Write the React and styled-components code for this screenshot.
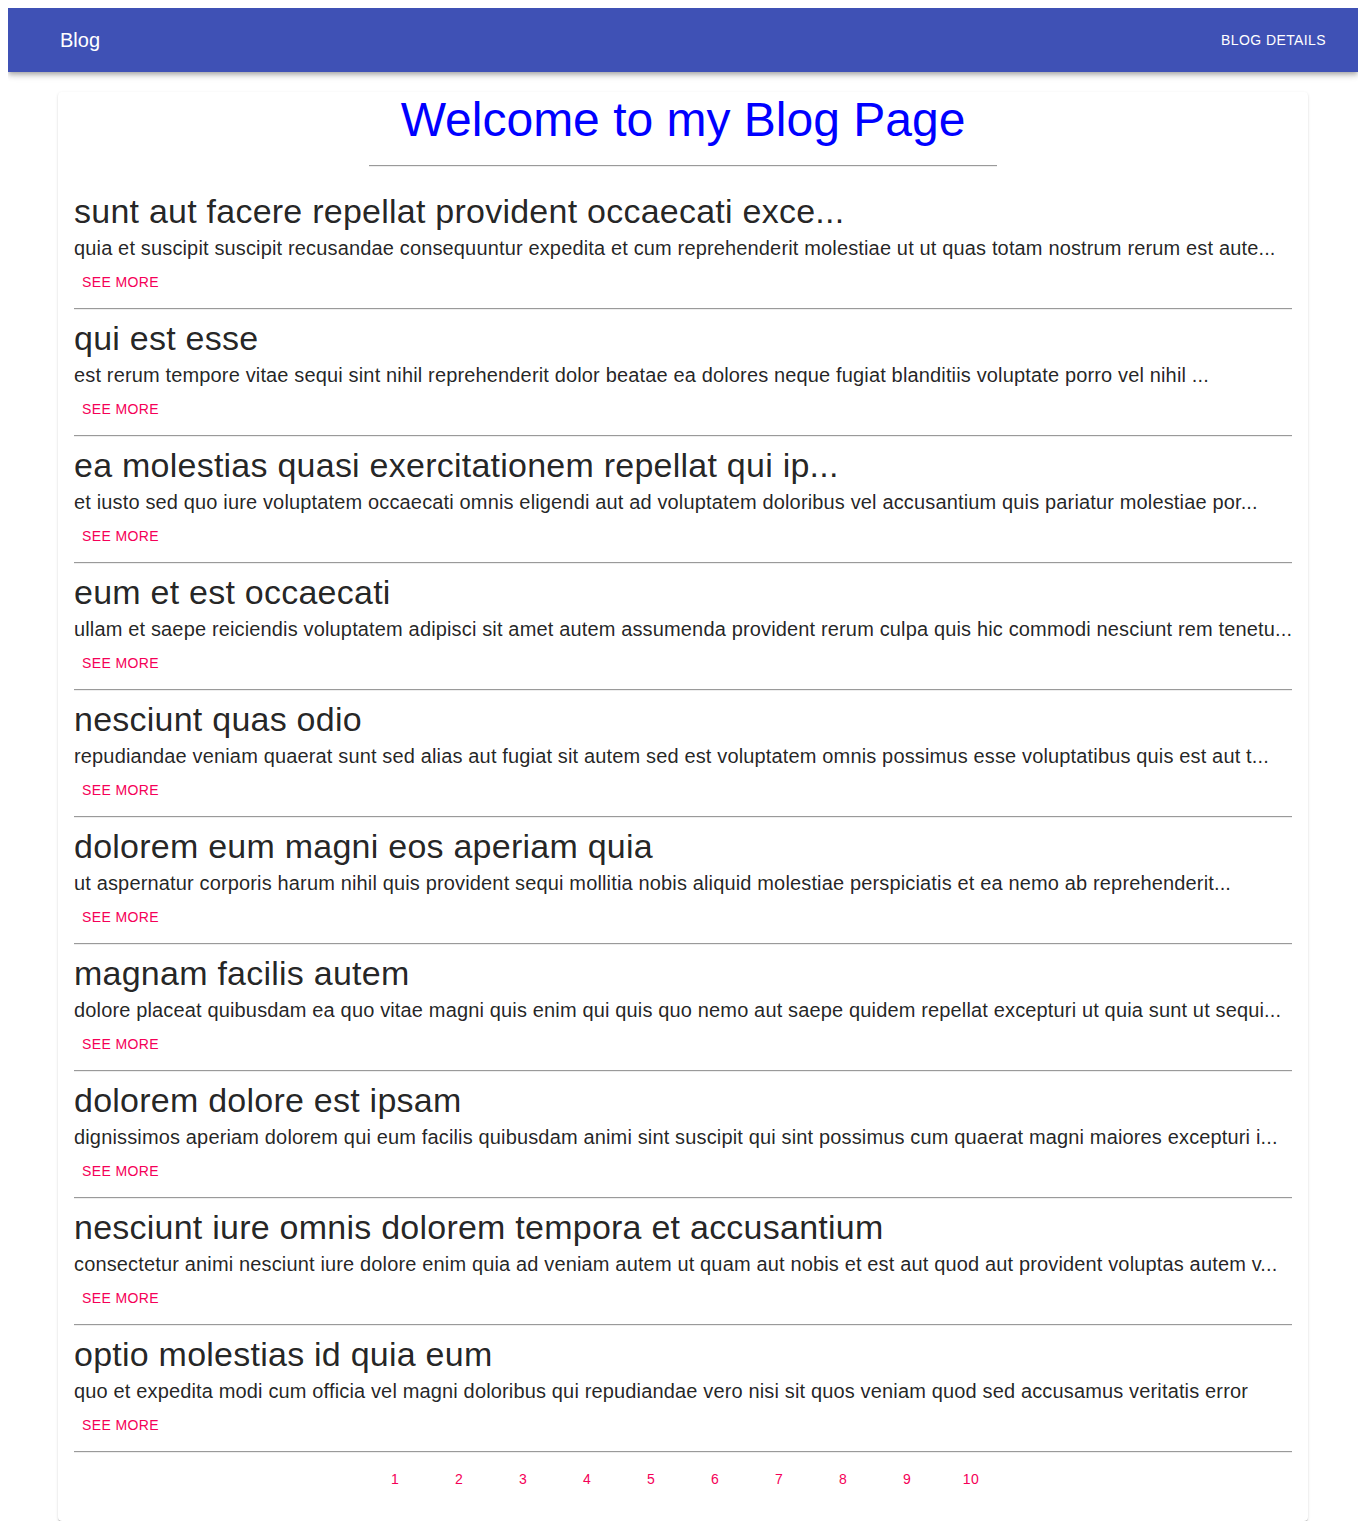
import React from "react";
import styled, { createGlobalStyle } from "styled-components";

const GlobalStyle = createGlobalStyle`
  body {
    margin: 8px;
    background: #ffffff;
    font-family: "Liberation Sans", Arial, sans-serif;
    color: rgba(0, 0, 0, 0.87);
  }
  * { box-sizing: border-box; }
`;

const AppBar = styled.header`
  height: 64px;
  background: #3f51b5;
  color: #fff;
  display: flex;
  align-items: center;
  justify-content: space-between;
  padding: 0 24px;
  box-shadow: 0px 2px 4px -1px rgba(0,0,0,0.2), 0px 4px 5px 0px rgba(0,0,0,0.14), 0px 1px 10px 0px rgba(0,0,0,0.12);
`;

const Brand = styled.div`
  margin-left: 28px;
  font-size: 20px;
  line-height: 1.6;
  font-weight: 500;
`;

const NavButton = styled.button`
  background: none;
  border: 0;
  color: #fff;
  font-family: inherit;
  font-size: 14px;
  line-height: 24px;
  letter-spacing: 0.02857em;
  text-transform: uppercase;
  padding: 6px 8px;
  cursor: pointer;
`;

const Paper = styled.main`
  margin: 20px 50px 0;
  background: #fff;
  border-radius: 4px;
  padding: 0 16px 24px;
  box-shadow: 0px 2px 1px -1px rgba(0,0,0,0.2), 0px 1px 1px 0px rgba(0,0,0,0.14), 0px 1px 3px 0px rgba(0,0,0,0.12);
`;

const Heading = styled.h1`
  margin: 0;
  font-size: 48px;
  line-height: 56px;
  font-weight: 400;
  color: #0000ff;
  text-align: center;
`;

const Rule = styled.hr`
  border: 0;
  border-top: 1px solid #9a9a9a;
  border-bottom: 1px solid #eeeeee;
  height: 0;
  width: ${(p) => p.$width || "100%"};
  margin: ${(p) => p.$margin || "8px 0 7px"};
`;

const Item = styled.article`
  display: flex;
  flex-direction: column;
  align-items: flex-start;
`;

const PostTitle = styled.h2`
  margin: 0;
  font-size: 34px;
  line-height: 42px;
  font-weight: 400;
  letter-spacing: 0.24px;
  color: rgba(0, 0, 0, 0.87);
  white-space: nowrap;
`;

const PostBody = styled.p`
  margin: 4px 0 0;
  font-size: 20px;
  line-height: 24px;
  letter-spacing: 0.15px;
  color: rgba(0, 0, 0, 0.87);
  white-space: nowrap;
`;

const TextButton = styled.button`
  background: none;
  border: 0;
  border-radius: 4px;
  color: #f50057;
  font-family: inherit;
  font-size: 14px;
  line-height: 24px;
  letter-spacing: 0.02857em;
  text-transform: uppercase;
  padding: 6px 8px;
  min-width: 64px;
  margin-top: ${(p) => p.$mt || "0"};
  cursor: pointer;
`;

const Pagination = styled.nav`
  display: flex;
  justify-content: center;
`;

const posts = [
  ["sunt aut facere repellat provident occaecati exce...", "quia et suscipit suscipit recusandae consequuntur expedita et cum reprehenderit molestiae ut ut quas totam nostrum rerum est aute..."],
  ["qui est esse", "est rerum tempore vitae sequi sint nihil reprehenderit dolor beatae ea dolores neque fugiat blanditiis voluptate porro vel nihil ..."],
  ["ea molestias quasi exercitationem repellat qui ip...", "et iusto sed quo iure voluptatem occaecati omnis eligendi aut ad voluptatem doloribus vel accusantium quis pariatur molestiae por..."],
  ["eum et est occaecati", "ullam et saepe reiciendis voluptatem adipisci sit amet autem assumenda provident rerum culpa quis hic commodi nesciunt rem tenetu..."],
  ["nesciunt quas odio", "repudiandae veniam quaerat sunt sed alias aut fugiat sit autem sed est voluptatem omnis possimus esse voluptatibus quis est aut t..."],
  ["dolorem eum magni eos aperiam quia", "ut aspernatur corporis harum nihil quis provident sequi mollitia nobis aliquid molestiae perspiciatis et ea nemo ab reprehenderit..."],
  ["magnam facilis autem", "dolore placeat quibusdam ea quo vitae magni quis enim qui quis quo nemo aut saepe quidem repellat excepturi ut quia sunt ut sequi..."],
  ["dolorem dolore est ipsam", "dignissimos aperiam dolorem qui eum facilis quibusdam animi sint suscipit qui sint possimus cum quaerat magni maiores excepturi i..."],
  ["nesciunt iure omnis dolorem tempora et accusantium", "consectetur animi nesciunt iure dolore enim quia ad veniam autem ut quam aut nobis et est aut quod aut provident voluptas autem v..."],
  ["optio molestias id quia eum", "quo et expedita modi cum officia vel magni doloribus qui repudiandae vero nisi sit quos veniam quod sed accusamus veritatis error"],
];

export default function App() {
  return (
    <>
      <GlobalStyle />
      <AppBar>
        <Brand>Blog</Brand>
        <NavButton>Blog Details</NavButton>
      </AppBar>
      <Paper>
        <Heading>Welcome to my Blog Page</Heading>
        <Rule $width="628px" $margin="17px auto 23px" />
        {posts.map(([title, body], i) => (
          <React.Fragment key={i}>
            <Item>
              <PostTitle>{title}</PostTitle>
              <PostBody>{body}</PostBody>
              <TextButton $mt="4px">See More</TextButton>
            </Item>
            <Rule $margin={i === posts.length - 1 ? "8px 0 8px" : "8px 0 7px"} />
          </React.Fragment>
        ))}
        <Pagination>
          {Array.from({ length: 10 }, (_, i) => (
            <TextButton key={i}>{i + 1}</TextButton>
          ))}
        </Pagination>
      </Paper>
    </>
  );
}
